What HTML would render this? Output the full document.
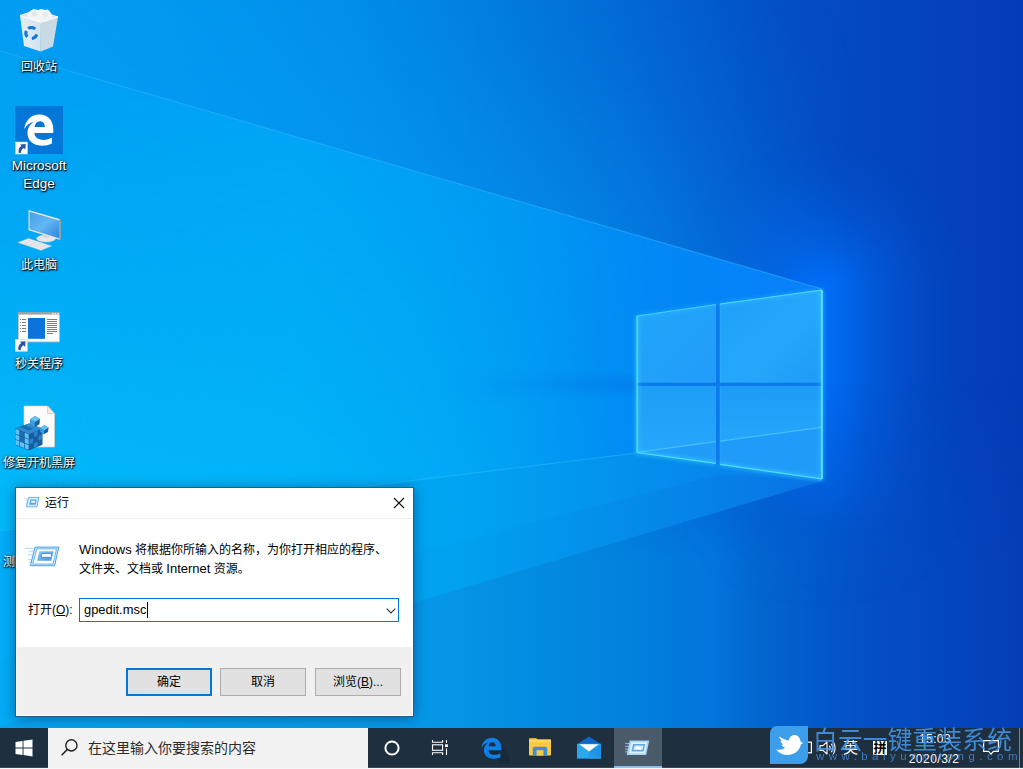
<!DOCTYPE html>
<html lang="zh-CN">
<head>
<meta charset="utf-8">
<title>运行 - gpedit.msc</title>
<style>
html,body{margin:0;padding:0;}
body{width:1023px;height:769px;overflow:hidden;position:relative;background:#0a7fe0;
  font-family:"Liberation Sans","Noto Sans CJK SC",sans-serif;}
#wall{position:absolute;left:0;top:0;width:1023px;height:769px;}
.abs{position:absolute;}
.dlabel{position:absolute;color:#fff;font-size:12px;line-height:17px;text-align:center;white-space:nowrap;
  text-shadow:1px 1px 1px rgba(0,0,0,.9),0 0 3px rgba(0,0,0,.75),0 1px 2px rgba(0,0,0,.6);}
.la2{font-size:13.4px;line-height:17.6px;}
/* dialog */
#dlg{position:absolute;left:15px;top:487px;width:397px;height:228px;background:#fff;border:1px solid #1a5f8a;
  box-shadow:0 1px 12px rgba(0,20,50,.42);}
#dlg .title{position:absolute;left:29px;top:7px;font-size:12px;line-height:16px;color:#000;}
#dlg .sep{position:absolute;left:0;top:30px;width:397px;height:1px;background:#efefef;}
#dlg .foot{position:absolute;left:1px;top:159px;width:395px;height:68px;background:#f0f0f0;}
#dlg .txt{position:absolute;left:63px;top:53.2px;font-size:12px;line-height:17.4px;color:#000;white-space:nowrap;}
#dlg .la{font-size:13px;}
#dlg .lbl{position:absolute;left:12px;top:114px;font-size:12px;line-height:17px;color:#000;white-space:nowrap;}
#dlg .combo{position:absolute;left:63px;top:110px;width:318px;height:22px;border:1px solid #0078d7;background:#fff;}
#dlg .combo .val{position:absolute;left:4px;top:2px;font-size:12.9px;line-height:17px;color:#000;}
#dlg .combo .caret{position:absolute;left:67px;top:3px;width:1px;height:16px;background:#000;}
.btn{position:absolute;top:180px;width:84px;height:26px;border:1px solid #adadad;background:#e1e1e1;
  font-size:12px;line-height:27px;text-align:center;color:#000;}
.btn.def{border:2px solid #0078d7;width:82px;height:24px;line-height:25px;}
/* taskbar */
#tb{position:absolute;left:0;top:728px;width:1023px;height:41px;background:#1e2f3f;}
#search{position:absolute;left:48px;top:0px;width:320px;height:40px;background:#f2f2f2;}
#search .ph{position:absolute;left:40px;top:10px;font-size:14px;line-height:20px;color:#2b2b2b;white-space:nowrap;}
.tray{color:#fff;white-space:nowrap;}
.wm1{left:813px;top:-7.5px;font-size:24.6px;line-height:34px;color:#469af0;opacity:.85;font-weight:400;white-space:nowrap;letter-spacing:0.3px;font-family:"Noto Sans CJK SC",sans-serif;}
.wm2{left:816px;top:21px;font-size:11.5px;line-height:14px;color:#4a8fdc;opacity:.8;white-space:nowrap;letter-spacing:4.45px;}
</style>
</head>
<body>
<svg id="wall" width="1023" height="769" viewBox="0 0 1023 769">
  <defs>
    <linearGradient id="base" x1="0" y1="0" x2="1023" y2="0" gradientUnits="userSpaceOnUse">
      <stop offset="0" stop-color="#009cf0"/>
      <stop offset="0.12" stop-color="#0099ee"/>
      <stop offset="0.34" stop-color="#018be8"/>
      <stop offset="0.55" stop-color="#026fd6"/>
      <stop offset="0.76" stop-color="#044ec6"/>
      <stop offset="1" stop-color="#043cb6"/>
    </linearGradient>
    <!-- brightening toward the beam edge in the upper wall -->
    <linearGradient id="topfade" x1="400" y1="166" x2="478" y2="-104" gradientUnits="userSpaceOnUse">
      <stop offset="0" stop-color="#06a0f8" stop-opacity="0.46"/>
      <stop offset="0.5" stop-color="#06a0f8" stop-opacity="0.18"/>
      <stop offset="1" stop-color="#06a0f8" stop-opacity="0"/>
    </linearGradient>
    <linearGradient id="beamA" x1="0" y1="0" x2="822" y2="0" gradientUnits="userSpaceOnUse">
      <stop offset="0" stop-color="#00a0f3"/>
      <stop offset="0.2" stop-color="#00a2f5"/>
      <stop offset="0.36" stop-color="#00a4f6"/>
      <stop offset="0.63" stop-color="#0097f2"/>
      <stop offset="0.73" stop-color="#028cf4"/>
      <stop offset="0.88" stop-color="#0484f8"/>
      <stop offset="1" stop-color="#0a80fa"/>
    </linearGradient>
    <linearGradient id="beamAv" x1="0" y1="90" x2="0" y2="480" gradientUnits="userSpaceOnUse">
      <stop offset="0" stop-color="#04d0ff" stop-opacity="0"/>
      <stop offset="1" stop-color="#04d0ff" stop-opacity="0.5"/>
    </linearGradient>
    <linearGradient id="beamAfade" x1="0" y1="0" x2="822" y2="0" gradientUnits="userSpaceOnUse">
      <stop offset="0" stop-color="#fff" stop-opacity="1"/>
      <stop offset="0.5" stop-color="#fff" stop-opacity="0.6"/>
      <stop offset="0.8" stop-color="#fff" stop-opacity="0"/>
    </linearGradient>
    <linearGradient id="topfadeM" x1="0" y1="0" x2="1023" y2="0" gradientUnits="userSpaceOnUse">
      <stop offset="0" stop-color="#fff" stop-opacity="0.9"/>
      <stop offset="0.45" stop-color="#fff" stop-opacity="1"/>
      <stop offset="0.62" stop-color="#fff" stop-opacity="0.8"/>
      <stop offset="0.76" stop-color="#fff" stop-opacity="0.4"/>
      <stop offset="0.835" stop-color="#fff" stop-opacity="0"/>
    </linearGradient>
    <mask id="mT"><rect width="1023" height="769" fill="url(#topfadeM)"/></mask>
    <mask id="mA"><rect width="1023" height="769" fill="url(#beamAfade)"/></mask>
    <linearGradient id="beamB" x1="0" y1="0" x2="822" y2="0" gradientUnits="userSpaceOnUse">
      <stop offset="0" stop-color="#03adf7"/>
      <stop offset="0.3" stop-color="#02abf6"/>
      <stop offset="0.56" stop-color="#00a4f2"/>
      <stop offset="0.8" stop-color="#058dec"/>
      <stop offset="1" stop-color="#097aeb"/>
    </linearGradient>
    <linearGradient id="beamC" x1="0" y1="0" x2="822" y2="0" gradientUnits="userSpaceOnUse">
      <stop offset="0" stop-color="#04aaf5"/>
      <stop offset="0.3" stop-color="#02a8f3"/>
      <stop offset="0.56" stop-color="#00a1f0"/>
      <stop offset="0.8" stop-color="#0588e8"/>
      <stop offset="1" stop-color="#0872e6"/>
    </linearGradient>
    <linearGradient id="floor" x1="0" y1="0" x2="1023" y2="0" gradientUnits="userSpaceOnUse">
      <stop offset="0" stop-color="#08a2ee"/>
      <stop offset="0.41" stop-color="#0698e8"/>
      <stop offset="0.59" stop-color="#0284de"/>
      <stop offset="0.696" stop-color="#0275dc"/>
      <stop offset="0.745" stop-color="#0365ce"/>
      <stop offset="0.84" stop-color="#0450c6"/>
      <stop offset="1" stop-color="#043eb6"/>
    </linearGradient>
    <linearGradient id="floorM" x1="0" y1="380" x2="0" y2="560" gradientUnits="userSpaceOnUse">
      <stop offset="0" stop-color="#fff" stop-opacity="0"/>
      <stop offset="1" stop-color="#fff" stop-opacity="1"/>
    </linearGradient>
    <linearGradient id="glowV" x1="0" y1="380" x2="0" y2="620" gradientUnits="userSpaceOnUse">
      <stop offset="0" stop-color="#fff" stop-opacity="1"/>
      <stop offset="0.4" stop-color="#fff" stop-opacity="0.55"/>
      <stop offset="0.6" stop-color="#fff" stop-opacity="0.3"/>
      <stop offset="1" stop-color="#fff" stop-opacity="0"/>
    </linearGradient>
    <mask id="mG"><rect width="1023" height="769" fill="url(#glowV)"/></mask>
    <filter id="eg" filterUnits="userSpaceOnUse" x="600" y="260" width="260" height="250"><feGaussianBlur stdDeviation="2.2"/></filter>
    <linearGradient id="barSh" x1="637" y1="0" x2="440" y2="0" gradientUnits="userSpaceOnUse">
      <stop offset="0" stop-color="#0468e0" stop-opacity="0.3"/>
      <stop offset="0.5" stop-color="#0468e0" stop-opacity="0.12"/>
      <stop offset="1" stop-color="#0468e0" stop-opacity="0"/>
    </linearGradient>
    <mask id="mF"><rect width="1023" height="769" fill="url(#floorM)"/></mask>
    <radialGradient id="glowT" cx="822" cy="290" r="150" gradientUnits="userSpaceOnUse">
      <stop offset="0" stop-color="#0070fa" stop-opacity="0.95"/>
      <stop offset="0.15" stop-color="#0070fa" stop-opacity="0.75"/>
      <stop offset="0.28" stop-color="#0070fa" stop-opacity="0.5"/>
      <stop offset="0.52" stop-color="#0070fa" stop-opacity="0.23"/>
      <stop offset="0.75" stop-color="#0070fa" stop-opacity="0.08"/>
      <stop offset="1" stop-color="#0070fa" stop-opacity="0"/>
    </radialGradient>
    <radialGradient id="glowB" cx="822" cy="480" r="150" gradientUnits="userSpaceOnUse">
      <stop offset="0" stop-color="#0070fa" stop-opacity="0.95"/>
      <stop offset="0.15" stop-color="#0070fa" stop-opacity="0.75"/>
      <stop offset="0.28" stop-color="#0070fa" stop-opacity="0.5"/>
      <stop offset="0.52" stop-color="#0070fa" stop-opacity="0.23"/>
      <stop offset="0.75" stop-color="#0070fa" stop-opacity="0.08"/>
      <stop offset="1" stop-color="#0070fa" stop-opacity="0"/>
    </radialGradient>
    <linearGradient id="glowM" x1="822" y1="0" x2="972" y2="0" gradientUnits="userSpaceOnUse">
      <stop offset="0" stop-color="#0070fa" stop-opacity="0.95"/>
      <stop offset="0.15" stop-color="#0070fa" stop-opacity="0.75"/>
      <stop offset="0.28" stop-color="#0070fa" stop-opacity="0.5"/>
      <stop offset="0.52" stop-color="#0070fa" stop-opacity="0.23"/>
      <stop offset="0.75" stop-color="#0070fa" stop-opacity="0.08"/>
      <stop offset="1" stop-color="#0070fa" stop-opacity="0"/>
    </linearGradient>
    <linearGradient id="paneTL" x1="0" y1="0" x2="1" y2="1">
      <stop offset="0" stop-color="#20a6fa"/><stop offset="1" stop-color="#229cfa"/>
    </linearGradient>
    <linearGradient id="paneTR" x1="0" y1="0" x2="1" y2="1">
      <stop offset="0" stop-color="#1f9ff8"/><stop offset="0.55" stop-color="#25a8fb"/><stop offset="1" stop-color="#1f9af8"/>
    </linearGradient>
    <linearGradient id="paneBL" x1="0" y1="0" x2="0" y2="1">
      <stop offset="0" stop-color="#1f9ef8"/><stop offset="0.8" stop-color="#26a6fb"/><stop offset="1" stop-color="#26a6fb"/>
    </linearGradient>
    <linearGradient id="paneBR" x1="0" y1="0" x2="0" y2="1">
      <stop offset="0" stop-color="#1e9cf8"/><stop offset="0.5" stop-color="#25a4fb"/><stop offset="1" stop-color="#25a4fb"/>
    </linearGradient>
  </defs>
  <rect width="1023" height="769" fill="url(#base)"/>
  <polygon points="0,0 860,0 860,300 822,289 0,51" fill="url(#topfade)" mask="url(#mT)"/>
  <!-- floor area -->
  <polygon points="0,700 822,380 1023,380 1023,769 0,769" fill="url(#floor)" mask="url(#mF)"/>
  <!-- window glow -->
  <g mask="url(#mG)">
  <path d="M672 290 A150 150 0 0 1 972 290Z" fill="url(#glowT)"/>
  <rect x="822" y="290" width="150" height="190" fill="url(#glowM)"/>
  <path d="M972 480 A150 150 0 0 1 672 480Z" fill="url(#glowB)"/>
  </g>
  <!-- beams -->
  <polygon points="822,289 0,51 0,726 822,481" fill="url(#beamC)"/>
  <polygon points="822,289 0,51 0,660 721,474 822,481" fill="url(#beamB)"/>
  <polygon points="822,289 0,51 0,531 637,453 822,440" fill="url(#beamA)"/>
  <polygon points="822,289 0,51 0,531 637,453 822,440" fill="url(#beamAv)" mask="url(#mA)"/>
  <line x1="0" y1="51" x2="822" y2="289" stroke="#30b0fa" stroke-width="1.2" opacity="0.55"/>
  <line x1="0" y1="531" x2="637" y2="453" stroke="#30c0ff" stroke-width="1.2" opacity="0.45"/>
  <polygon points="637,374 637,395 440,406 440,364" fill="url(#barSh)" opacity="0.35"/>
  <polygon points="637,378 637,391 440,398 440,372" fill="url(#barSh)" opacity="0.4"/>
  <polygon points="637,381.500 637,387.500 440,391 440,379" fill="url(#barSh)" opacity="0.45"/>
  <!-- window panes -->
  <polygon points="636.5,316 822,290 822,479.5 636.5,452.5" fill="#0b7aec"/>
  <g stroke="#46ccff" stroke-width="0.8" stroke-opacity="0.4">
    <polygon points="637,316 715.6,304.6 715.6,382.2 637,382.2" fill="url(#paneTL)"/>
    <polygon points="720,304 822,290 822,382.2 720,382.2" fill="url(#paneTR)"/>
    <polygon points="637,386.6 715.6,386.6 715.6,463.4 637,452.5" fill="url(#paneBL)"/>
    <polygon points="720,386.6 822,386.6 822,479 720,464.4" fill="url(#paneBR)"/>
  </g>
  <clipPath id="lowp"><polygon points="637,386.6 715.6,386.6 715.6,463.4 637,452.5"/><polygon points="720,386.6 822,386.6 822,479 720,464.4"/></clipPath>
  <g clip-path="url(#lowp)">
    <polygon points="636,452.5 822,427.3 822,480 636,480" fill="#1c90f6" opacity="0.45"/>
    <line x1="636" y1="452.5" x2="822" y2="427.3" stroke="#4cc8ff" stroke-width="1.3" opacity="0.8"/>
  </g>
  <g filter="url(#eg)" fill="none" stroke="#40e0ff" stroke-width="2.4" opacity="0.75">
    <polyline points="637,316 637,452.5 715.6,463.4"/>
    <polyline points="822,290 822,479 720,464.4"/>
    <polyline points="715.6,304.6 637,316" opacity="0.4"/>
    <polyline points="720,304 822,290" opacity="0.5"/>
  </g>
  <line x1="822" y1="290" x2="822" y2="479" stroke="#6af0ff" stroke-width="1.5" opacity="0.9"/>
  <line x1="637" y1="316" x2="637" y2="452.5" stroke="#5ee6ff" stroke-width="1.3" opacity="0.85"/>
  <polyline points="637,452.5 715.6,463.4" stroke="#5ee6ff" stroke-width="1.2" opacity="0.8" fill="none"/>
  <polyline points="720,464.4 822,479" stroke="#5ee6ff" stroke-width="1.2" opacity="0.8" fill="none"/>
  <polyline points="637,316 715.6,304.6" stroke="#60dcff" stroke-width="1" opacity="0.6" fill="none"/>
  <polyline points="720,304 822,290" stroke="#60e4ff" stroke-width="1.1" opacity="0.8" fill="none"/>
</svg>

<!-- desktop icons -->
<svg class="abs" style="left:0;top:0" width="90" height="480" viewBox="0 0 90 480">
  <defs>
    <linearGradient id="scr" x1="0" y1="0" x2="1" y2="1"><stop offset="0" stop-color="#469fea"/><stop offset="0.5" stop-color="#62b6f2"/><stop offset="1" stop-color="#2b86de"/></linearGradient>
    <linearGradient id="binL" x1="0" y1="0" x2="1" y2="0"><stop offset="0" stop-color="#f4f6f8"/><stop offset="1" stop-color="#e2e7eb"/></linearGradient>
    <g id="sc"><rect x="0" y="0" width="12" height="12" fill="#fafafa" stroke="#d8d8d8" stroke-width="0.6"/><path d="M3.200 11C2.400 7.400 3.800 5 6 3.900L4.600 2.400L10.200 2L9.800 7.600L8.200 6C6.600 6.800 5.500 8.400 5.300 11Z" fill="#2a54a0"/></g>
  </defs>
  <!-- recycle bin -->
  <g>
    <polygon points="20,15.500 36.500,10 58,17 41,22" fill="#d9e2e9" stroke="#f2f6f9" stroke-width="1"/>
    <polygon points="27,15 30.500,10.500 34,9 37.500,10.500 41,8.800 45,10 48,9.600 51,13 53,17.500 41,21.400 27.500,17.300" fill="#f2f5f7"/>
    <polygon points="31,12.500 35,11 37.500,15 33.500,17" fill="#e0e6ea"/>
    <polygon points="42,12.500 46.500,11.500 48.500,16.500 44,17.500" fill="#e6eaee"/>
    <polygon points="20,15.500 41,22 40.700,51.600 24,46" fill="url(#binL)" opacity="0.93"/>
    <polygon points="41,22 58,17 53,46.600 40.700,51.600" fill="#d9dfe4" opacity="0.93"/>
    <polyline points="20,15.500 41,22 58,17" fill="none" stroke="#fbfdfe" stroke-width="1.200"/>
    <g fill="none" stroke="#1976d2" stroke-width="3.100">
      <path d="M28.100 28.600 A5.500 5.500 0 0 1 35.200 29.100"/>
      <path d="M27.400 36.900 A5.500 5.500 0 0 1 26.300 30.800"/>
      <path d="M36.700 34.400 A5.500 5.500 0 0 1 31.800 38.500"/>
    </g>
  </g>
  <!-- edge -->
  <rect x="15" y="106" width="48" height="48" fill="#0277d8"/>
  <g transform="translate(24 114.5) scale(0.977 1)">
    <path fill="#fff" fill-rule="evenodd" d="M0.3 14.4C1.3 6 7 0 16 0C25 0 30 6.6 30 15.2L30 18.6L10.6 18.6C10.9 23 14.6 25.4 19.6 25.4C23 25.4 26 24.5 28.6 22.9L28.6 29C25.6 30.5 22 31.2 18.1 31.2C9 31.2 3.6 26 3.6 18.6C3.6 13.6 6 9.6 10 7.4C6 8.1 2.4 10.6 0.3 14.4ZM10.8 12.6L21.4 12.6C21.4 9 19.5 6.8 16.3 6.8C13.2 6.8 11.3 9 10.8 12.6Z"/>
  </g>
  <use href="#sc" x="15.5" y="142"/>
  <!-- this pc -->
  <g>
    <ellipse cx="46" cy="238.5" rx="9.5" ry="3.6" fill="#e6e8ea" stroke="#c9ccd0" stroke-width="0.5"/>
    <polygon points="43,232 49,234 49,238 43,237" fill="#cfd3d6"/>
    <polygon points="28.5,210 60.5,219.3 60.5,240 28.5,230.3" fill="#e9e4dc"/>
    <polygon points="59.4,219 60.5,219.3 60.5,240 59.4,239.6" fill="#8c7f70"/>
    <polygon points="29.6,211.8 59.2,220.4 59.2,238.2 29.6,229.2" fill="url(#scr)"/>
    <polygon points="18,242.5 28.5,238.5 51.5,246 41,250.3" fill="#eef0f1" stroke="#c8ccd0" stroke-width="0.5"/>
    <path d="M21.5 242.6 L44 249 M24.5 241.3 L47 247.8 M27.5 240.2 L49.5 246.8 M24 243.8 L31.5 240.6 M29 245.2 L36.5 242.2 M34 246.6 L41.5 243.8 M39 248.2 L46.5 245.2" stroke="#d3d7da" stroke-width="0.6" fill="none"/>
  </g>
  <!-- miao guan cheng xu -->
  <g>
    <rect x="18.400" y="312.900" width="41" height="29" fill="#fcfcfc" stroke="#c4c0bc" stroke-width="0.8"/>
    <rect x="18" y="312.500" width="41.800" height="2" fill="#a29c96"/>
    <rect x="52" y="313" width="1.600" height="1" fill="#e8e8e8"/><rect x="54.600" y="313" width="1.600" height="1" fill="#e8e8e8"/><rect x="57.200" y="313" width="1.600" height="1" fill="#e8e8e8"/>
    <rect x="28" y="318" width="17" height="20.800" fill="#0b73da"/>
    <g fill="#7c7c7c"><rect x="47" y="319" width="10" height="1"/><rect x="47" y="321" width="10" height="1"/><rect x="47" y="323" width="10" height="1"/><rect x="47" y="325" width="10" height="1"/><rect x="47" y="327" width="10" height="1"/><rect x="47" y="329" width="10" height="1"/><rect x="47" y="331" width="10" height="1"/><rect x="47" y="333" width="6" height="1"/></g>
    <g fill="#7c7c7c"><rect x="22" y="319" width="4" height="1"/><rect x="22" y="322" width="4" height="1"/><rect x="22" y="325" width="4" height="1"/><rect x="22" y="328" width="4" height="1"/><rect x="22" y="331" width="4" height="1"/></g>
    <g fill="#6a7a8c"><rect x="20" y="319" width="1" height="1"/><rect x="20" y="322" width="1" height="1"/><rect x="20" y="325" width="1" height="1"/><rect x="20" y="328" width="1" height="1"/><rect x="20" y="331" width="1" height="1"/></g>
  </g>
  <use href="#sc" x="15.3" y="339.3"/>
  <!-- reg file -->
  <g>
    <polygon points="24,406 47.500,406 54.500,413.500 54.500,447 24,447" fill="#fcfcfc" stroke="#dccdbd" stroke-width="0.700"/>
    <polygon points="47.500,406 54.500,413.500 47.500,413.500" fill="#f1ece6" stroke="#d9c9b8" stroke-width="0.700"/>
    <!-- big cube cluster -->
    <polygon points="15,428.500 29,423.500 42.500,428.500 42.500,444.700 29,450.500 15,444.700" fill="#155e9e"/>
    <polygon points="15,428.500 29,423.500 42.500,428.500 29,434" fill="#2c8cd2"/>
    <polygon points="19.600,426.900 24.300,425.200 33.600,428.800 29,430.500" fill="#1a6aac"/>
    <g transform="translate(15 428.500) skewY(21.450)"><rect x="0.35" y="0.35" width="3.97" height="4.70" fill="#5ec2f6"/><rect x="0.35" y="5.75" width="3.97" height="4.70" fill="#5ec2f6"/><rect x="0.35" y="11.15" width="3.97" height="4.70" fill="#5ec2f6"/><rect x="5.02" y="11.15" width="3.97" height="4.70" fill="#5ec2f6"/><rect x="9.69" y="0.35" width="3.97" height="4.70" fill="#5ec2f6"/><rect x="9.69" y="5.75" width="3.97" height="4.70" fill="#5ec2f6"/><rect x="9.69" y="11.15" width="3.97" height="4.70" fill="#5ec2f6"/><rect x="5.02" y="0.35" width="3.97" height="4.70" fill="#1b6db0"/><rect x="5.02" y="5.75" width="3.97" height="4.70" fill="#1b6db0"/></g>
    <g transform="translate(29 434) skewY(-22.150)"><rect x="0.35" y="5.75" width="3.80" height="4.70" fill="#2a82c8"/><rect x="4.85" y="0.35" width="3.80" height="4.70" fill="#2a82c8"/><rect x="4.85" y="11.15" width="3.80" height="4.70" fill="#2a82c8"/><rect x="9.35" y="5.75" width="3.80" height="4.70" fill="#2a82c8"/></g>
    <!-- floating cubes -->
    <polygon points="30,419.500 35,416 40,419 39.400,424.300 34.400,427.200 30.300,424.200" fill="#17619f"/>
    <polygon points="30,419.500 35,416 40,419 35,422" fill="#62c4f6"/>
    <polygon points="30,419.500 35,422 34.400,427.200 30.300,424.200" fill="#3d9fe2"/>
    <polygon points="40,428 44.300,425.200 48.600,427.600 48,432 43.800,434.200 40.300,432" fill="#17619f"/>
    <polygon points="40,428 44.300,425.200 48.600,427.600 44.300,430.200" fill="#62c4f6"/>
    <polygon points="40,428 44.300,430.200 43.800,434.200 40.300,432" fill="#3d9fe2"/>
  </g>
</svg>
<div class="dlabel" style="left:9px;top:59px;width:60px">回收站</div>
<div class="dlabel la2" style="left:4px;top:157.3px;width:70px">Microsoft<br>Edge</div>
<div class="dlabel" style="left:9px;top:257px;width:60px">此电脑</div>
<div class="dlabel" style="left:4px;top:356px;width:70px">秒关程序</div>
<div class="dlabel" style="left:-1px;top:455px;width:80px">修复开机黑屏</div>
<div class="dlabel" style="left:3px;top:554px;width:12px;text-align:left">测</div>

<div id="dlg">
  <svg class="abs" style="left:8px;top:8px" width="16" height="12" viewBox="24 496 16 12">
    <path d="M24.600 498.800h3M25.600 500.800h1.800M25.400 503h1.600M25.800 505h1" stroke="#a9d6f8" stroke-width="0.8" fill="none"/>
    <polygon points="28.600,497.400 38.900,497.400 36.900,506.800 26.400,506.800" fill="#d4efff" stroke="#4b9fe6" stroke-width="0.8"/>
    <polygon points="30.500,499.400 36.700,499.400 35.700,504.700 29.300,504.700" fill="#5aa8e8"/>
    <rect x="31.300" y="500.800" width="3.800" height="2" fill="#f4fbff"/>
  </svg>
  <div class="title">运行</div>
  <svg class="abs" style="left:377px;top:9px" width="12" height="12" viewBox="0 0 12 12"><path d="M1 1 L11 11 M11 1 L1 11" stroke="#111" stroke-width="1.1" fill="none"/></svg>
  <div class="sep"></div>
  <svg class="abs" style="left:6px;top:50px" width="44" height="38" viewBox="22 538 44 38">
    <defs><linearGradient id="rg1" x1="0" y1="0" x2="1" y2="1"><stop offset="0" stop-color="#8ecbf6"/><stop offset="1" stop-color="#3f95e2"/></linearGradient></defs>
    <path d="M24.500 548.400H34.500M28.500 551.200H33.800M28 554.800H32.800M28 559.500H31.800M29 562.400H31" stroke="#a9d6f8" stroke-width="0.9" fill="none"/>
    <polygon points="35.100,547.100 58.800,547.100 54.600,565.700 30.400,565.700" fill="#c9ebff" stroke="#4b9fe6" stroke-width="1"/>
    <polygon points="36.700,548.900 56.500,548.900 53.100,564 32.900,564" fill="#ffffff" stroke="#62aeea" stroke-width="0.9"/>
    <polygon points="39.300,551.300 53.600,551.300 51.200,560.700 37.100,560.700" fill="url(#rg1)"/>
    <rect x="41.300" y="553.400" width="10.200" height="4" rx="0.800" fill="#f4fbff" stroke="#3a78c8" stroke-width="0.8"/>
  </svg>
  <div class="txt"><span class="la">Windows</span> 将根据你所输入的名称，为你打开相应的程序、<br>文件夹、文档或 <span class="la">Internet</span> 资源。</div>
  <div class="lbl">打开(<u>O</u>):</div>
  <div class="combo"><span class="val">gpedit.msc</span><i class="caret"></i>
    <svg class="abs" style="left:306px;top:9px" width="10" height="6" viewBox="0 0 10 6"><path d="M0.7 0.7 L5 5 L9.3 0.7" stroke="#333" stroke-width="1.1" fill="none"/></svg>
  </div>
  <div class="foot"></div>
  <div class="btn def" style="left:110px">确定</div>
  <div class="btn" style="left:204px">取消</div>
  <div class="btn" style="left:299px">浏览(<u>B</u>)...</div>
</div>

<div id="tb">
  <!-- start -->
  <svg class="abs" style="left:15px;top:11px" width="18" height="18" viewBox="0 0 18 18">
    <path fill="#fff" d="M0.5 2.9 L7.6 1.9 V8.5 H0.5Z M8.5 1.8 L17.5 0.5 V8.5 H8.5Z M0.5 9.4 H7.6 V16 L0.5 15Z M8.5 9.4 H17.5 V17.4 L8.5 16.1Z"/>
  </svg>
  <div id="search">
    <svg class="abs" style="left:11.500px;top:8.500px" width="20" height="20" viewBox="0 0 20 20">
      <circle cx="11.4" cy="8.4" r="5.6" fill="none" stroke="#222" stroke-width="1.4"/>
      <path d="M7.4 12.4 L1.6 18.2" stroke="#222" stroke-width="1.5" fill="none"/>
    </svg>
    <span class="ph">在这里输入你要搜索的内容</span>
  </div>
  <!-- cortana -->
  <svg class="abs" style="left:383px;top:11px" width="18" height="18" viewBox="0 0 18 18"><circle cx="9" cy="9" r="6.6" fill="none" stroke="#fff" stroke-width="2"/></svg>
  <!-- task view -->
  <svg class="abs" style="left:431px;top:11px" width="18" height="17" viewBox="0 0 18 17">
    <g fill="none" stroke="#fff" stroke-width="1.1">
      <path d="M1.500 1 V3.300 H11.600 V1"/>
      <rect x="1.500" y="5.800" width="10.100" height="5.500"/>
      <path d="M1.500 16 V13.800 H11.600 V16"/>
      <path d="M15.500 1 V4 M15.500 9.400 V16"/>
    </g>
    <rect x="14.100" y="5.300" width="2.800" height="2.700" fill="#fff"/>
  </svg>
  <!-- edge -->
  <svg class="abs" style="left:476px;top:6px" width="34" height="32" viewBox="0 0 34 32">
    <path d="M9 14 L24 29 L34 29 L34 24 L24 8Z" fill="#12202d" opacity="0.3"/>
    <g transform="translate(5.5 3.8) scale(0.66 0.67)">
      <path fill="#0f7fe6" fill-rule="evenodd" d="M0.3 14.4C1.3 6 7 0 16 0C25 0 30 6.6 30 15.2L30 18.6L10.6 18.6C10.9 23 14.6 25.4 19.6 25.4C23 25.4 26 24.5 28.6 22.9L28.6 29C25.6 30.5 22 31.2 18.1 31.2C9 31.2 3.6 26 3.6 18.6C3.6 13.6 6 9.6 10 7.4C6 8.1 2.4 10.6 0.3 14.4ZM10.8 12.6L21.4 12.6C21.4 9 19.5 6.8 16.3 6.8C13.2 6.8 11.3 9 10.8 12.6Z"/>
    </g>
  </svg>
  <!-- explorer -->
  <svg class="abs" style="left:528px;top:9px" width="24" height="21" viewBox="0 0 24 21">
    <path d="M1 2.2 Q1 1 2.2 1 H8.2 L10.2 3 H1Z" fill="#e8a520"/>
    <rect x="1" y="2.6" width="22" height="16" rx="0.8" fill="#f9c940"/>
    <rect x="1" y="2.6" width="22" height="2.4" fill="#fbd765"/>
    <path d="M4.800 18.600 V11.600 Q4.800 9.800 6.600 9.800 H17.400 Q19.200 9.800 19.200 11.600 V18.600Z" fill="#3e8ed6"/>
    <rect x="8.600" y="13.200" width="6.800" height="5.400" fill="#f9c940"/>
      </svg>
  <!-- mail -->
  <svg class="abs" style="left:576px;top:8px" width="26" height="23" viewBox="0 0 26 23">
    <polygon points="1,8.200 13,0.400 25,8.200" fill="#0f68cc"/>
    <rect x="1" y="7.800" width="24" height="14.800" fill="#2aa8ee"/>
    <polygon points="13,15.400 25,8.400 25,22.600" fill="#1b94e6"/>
    <polygon points="13,15.400 25,22.600 12,22.600" fill="#1f9cea"/>
    <polygon points="3.400,8.200 22.600,8.200 13,15.400" fill="#ffffff"/>
  </svg>
  <!-- active run -->
  <div class="abs" style="left:614px;top:0;width:48px;height:41px;background:#4b5a69"></div>
  <div class="abs" style="left:614px;top:38px;width:48px;height:3px;background:#82bdee"></div>
  <svg class="abs" style="left:625px;top:12px" width="25" height="15.5" viewBox="0 0 27 17">
    <path d="M0 4h5M0 7h4.4M0 10h3.6M0 13h3" stroke="#9fd0f6" stroke-width="1"/>
    <polygon points="5,0.6 26.4,0.6 23,16.4 1.6,16.4" fill="#a6d4f6"/>
    <polygon points="6.8,2.4 24.2,2.4 21.6,14.6 4.2,14.6" fill="#e2f2ff"/>
    <polygon points="8.6,4.4 22,4.4 20.2,12.6 6.8,12.6" fill="#5aaae8"/>
    <polygon points="10.2,6 20.2,6 19,11 9,11" fill="#cfe8fb"/>
    <rect x="11.4" y="7.4" width="6.2" height="2.2" fill="#fff"/>
  </svg>
  <!-- tray -->
  <svg class="abs" style="left:796px;top:13px" width="17" height="15" viewBox="0 0 17 15"><rect x="1.6" y="1.2" width="13.8" height="10.6" fill="none" stroke="#fff" stroke-width="1.2"/><path d="M5 14h7" stroke="#fff" stroke-width="1.2"/></svg>
  <svg class="abs" style="left:819px;top:12px" width="18" height="16" viewBox="0 0 18 16">
    <path d="M1 5.6 H4 L8 2 V14 L4 10.4 H1Z" fill="none" stroke="#fff" stroke-width="1.1" stroke-linejoin="round"/>
    <path d="M10.4 5.6 Q11.8 8 10.4 10.4 M12.4 3.8 Q14.8 8 12.4 12.2 M14.4 2 Q17.8 8 14.4 14" fill="none" stroke="#fff" stroke-width="1.1"/>
  </svg>
  <div class="abs tray" style="left:843px;top:10px;font-size:15px;line-height:20px;">英</div>
  <div class="abs" style="left:873px;top:13px;width:14px;height:14px;background:#fff;color:#000;font-size:13px;line-height:14px;text-align:center;overflow:hidden;font-weight:700">拼</div>
  <div class="abs tray" style="left:905px;top:3px;width:60px;text-align:center;font-size:12px;line-height:16px;letter-spacing:0.4px;">15:03</div>
  <div class="abs tray" style="left:899px;top:22.5px;width:70px;text-align:center;font-size:12px;line-height:16px;letter-spacing:0.5px;">2020/3/2</div>
  <svg class="abs" style="left:982px;top:11px" width="18" height="18" viewBox="0 0 18 18"><path d="M1.6 1.6 H16.4 V12.4 H11.4 L9 15.2 L6.6 12.4 H1.6Z" fill="none" stroke="#fff" stroke-width="1.2"/></svg>
  <div class="abs" style="left:1019px;top:0;width:1px;height:41px;background:#7b858f"></div>
  <!-- watermark -->
  <div class="abs" style="left:770px;top:-2px;width:38px;height:38px;background:#3d9fec;border-radius:7px 0 8px 0;"></div>
  <svg class="abs" style="left:776px;top:7px" width="28" height="21" viewBox="0 0 28 21">
    <path fill="#fff" d="M27 8.200L24.600 6.600C24.100 2.600 21.600 0 18.500 0C15.500 0 13.200 2.200 12.800 5.600C9.500 4.800 6 3.500 3 1.500C3.500 3.200 4.600 4.600 6 5.600L4.400 6.200C5 7.600 6 8.600 7.200 9.200L5.600 10C6.600 11.400 7.800 12.200 9.200 12.600C7.600 14 5.600 14.800 3.600 14.800C2.400 14.800 1.200 14.600 0 14.200C2.800 18 6.800 20 11.400 20C18.400 20 23.800 15.600 24.800 9.600Z"/>
  </svg>
  <div class="abs wm1">白云一键重装系统</div>
  <div class="abs wm2">www.baiyunxitong.com</div>
  <div class="abs" style="left:0;top:39px;width:1023px;height:1px;background:rgba(255,255,255,.12)"></div>
  <div class="abs" style="left:0;top:40px;width:1023px;height:1px;background:#f4f6f7"></div>
</div>
</body>
</html>
